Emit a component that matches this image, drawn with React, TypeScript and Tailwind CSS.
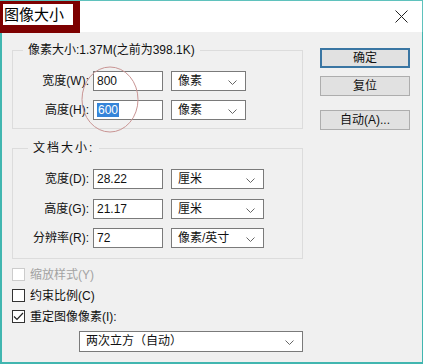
import React from "react";

type RowProps = {
  label: string;
  value: string;
  unit: string;
  selW: string;
  selected?: boolean;
};

function Chevron() {
  return (
    <svg width="9" height="5" viewBox="0 0 9 5" className="absolute right-[8px] top-[8px]">
      <path d="M0.5 0.5 L4.5 4.5 L8.5 0.5" fill="none" stroke="#666" strokeWidth="1" />
    </svg>
  );
}

function Select({ text, className }: { text: string; className: string }) {
  return (
    <div
      className={
        "relative h-[20px] border border-[#7a7a7a] bg-white pl-[6px] leading-[18px] text-[#111] " +
        className
      }
    >
      {text}
      <Chevron />
    </div>
  );
}

function Row({ label, value, unit, selW, selected }: RowProps) {
  return (
    <div className="flex h-[20px] items-center">
      <div className="w-[77px] pr-[1px] text-right">{label}</div>
      <div className="ml-[3px] h-[20px] w-[70px] border border-[#7a7a7a] bg-white pl-[3px] leading-[18px]">
        {selected ? (
          <span className="bg-[#3584d9] px-[1px] text-white">{value}</span>
        ) : (
          value
        )}
      </div>
      <Select text={unit} className={"ml-[8px] " + selW} />
    </div>
  );
}

function Check({ label, checked, disabled }: { label: string; checked?: boolean; disabled?: boolean }) {
  return (
    <div className="flex h-[21px] items-center">
      <div
        className={
          "flex h-[13px] w-[13px] items-center justify-center border bg-white " +
          (disabled ? "border-[#cccccc]" : "border-[#333333]")
        }
      >
        {checked && (
          <svg width="11" height="9" viewBox="0 0 11 9">
            <path d="M1 4.5 L4 7.5 L10 1" fill="none" stroke="#222" strokeWidth="1.2" />
          </svg>
        )}
      </div>
      <span className={"ml-[5px] " + (disabled ? "text-[#a3a3a3]" : "text-[#111]")}>{label}</span>
    </div>
  );
}

export default function App() {
  return (
    <div className="relative h-[364px] w-[423px] bg-white font-['Liberation_Sans','Noto_Sans_CJK_SC',sans-serif] text-[12px] text-[#111]">
      {/* title bar */}
      <div className="flex h-[32px] items-start justify-between border-r border-t border-[#5fc2bd] bg-white">
        <div className="h-[32px] w-[80px] bg-[#7d0000] pl-[3px] pt-[3px]">
          <div className="h-[21px] w-[70px] bg-white pl-[1px] text-[15px] leading-[21px] text-black">
            图像大小
          </div>
        </div>
        <svg width="13" height="13" viewBox="0 0 13 13" className="mr-[14px] mt-[9px]">
          <path d="M0.5 0.5 L12.5 12.5 M12.5 0.5 L0.5 12.5" stroke="#222" strokeWidth="1" />
        </svg>
      </div>

      {/* body */}
      <div className="flex h-[332px] border-b-2 border-l-2 border-r border-[#41b6b0] bg-[#f0f0f0]">
        <div className="ml-[10px] w-[291px]">
          <fieldset className="mt-[9px] h-[88px] border border-[#dcdcdc] px-0 pb-[8px]">
            <legend className="ml-[10px] px-[5px] leading-[18px]">像素大小:1.37M(之前为398.1K)</legend>
            <div className="flex flex-col gap-[9px] pt-[12px]">
              <Row label="宽度(W):" value="800" unit="像素" selW="w-[75px]" />
              <Row label="高度(H):" value="600" unit="像素" selW="w-[75px]" selected />
            </div>
          </fieldset>

          <fieldset className="mt-[10px] h-[120px] border border-[#dcdcdc]">
            <legend className="ml-[15px] px-[5px] leading-[18px] tracking-[2px]">文档大小:</legend>
            <div className="flex flex-col gap-[9.5px] pt-[12px]">
              <Row label="宽度(D):" value="28.22" unit="厘米" selW="w-[93px]" />
              <Row label="高度(G):" value="21.17" unit="厘米" selW="w-[93px]" />
              <Row label="分辨率(R):" value="72" unit="像素/英寸" selW="w-[93px]" />
            </div>
          </fieldset>

          <div className="mt-[5px]">
            <Check label="缩放样式(Y)" disabled />
            <Check label="约束比例(C)" />
            <Check label="重定图像像素(I):" checked />
          </div>

          <Select text="两次立方（自动）" className="ml-[67px] mt-[4px] h-[21px] w-[224px]" />
        </div>

        <div className="ml-[17px] mt-[16px] flex w-[90px] flex-col">
          <div className="h-[20px] border-2 border-[#3a76a3] bg-[#e1e1e1] text-center leading-[16px]">确定</div>
          <div className="mt-[8px] h-[20px] border border-[#adadad] bg-[#e1e1e1] text-center leading-[18px]">复位</div>
          <div className="mt-[14px] h-[20px] border border-[#adadad] bg-[#e1e1e1] text-center leading-[18px]">自动(A)...</div>
        </div>
      </div>

      {/* hand-drawn circle annotation */}
      <svg width="70" height="80" viewBox="0 0 70 80" className="pointer-events-none absolute left-[75px] top-[60px]">
        <ellipse cx="35" cy="39.5" rx="28" ry="32.5" fill="none" stroke="#c99594" strokeWidth="1" />
      </svg>
    </div>
  );
}
